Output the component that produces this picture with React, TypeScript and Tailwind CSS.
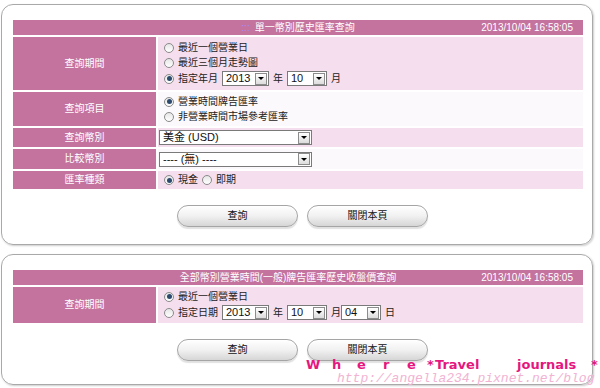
import { ReactNode } from 'react';

const PINK = 'bg-[#c4739f]';

function Radio({ checked = false }: { checked?: boolean }) {
  return (
    <span className="inline-flex items-center justify-center w-[10px] h-[10px] rounded-full border border-[#8a8a8a] bg-gradient-to-b from-[#e6e6e6] to-white shrink-0">
      {checked && <span className="w-[5px] h-[5px] rounded-full bg-[#2c4a6e]" />}
    </span>
  );
}

function Select({ value, width }: { value: string; width: string }) {
  return (
    <span
      className={`inline-flex items-center justify-between h-[15px] border border-[#7a7a7a] bg-white ${width}`}
    >
      <span className="pl-[3px] text-[11px] leading-none text-[#111] font-['Liberation_Sans','Noto_Sans_CJK_TC',sans-serif]">
        {value}
      </span>
      <span className="flex items-center justify-center w-[12px] h-[12px] mr-[1px] border border-[#8c8c8c] bg-gradient-to-b from-white to-[#dcdcdc]">
        <span className="w-0 h-0 border-l-[3px] border-r-[3px] border-t-[3px] border-l-transparent border-r-transparent border-t-black" />
      </span>
    </span>
  );
}

function Option({ checked, children }: { checked?: boolean; children: ReactNode }) {
  return (
    <span className="flex items-center gap-[4px]">
      <Radio checked={checked} />
      <span>{children}</span>
    </span>
  );
}

function Row({ label, height, light, children }: { label: string; height: string; light?: boolean; children: ReactNode }) {
  return (
    <div className={`flex gap-[2px] ${height}`}>
      <div className={`w-[143px] ${PINK} flex items-center justify-center text-white`}>{label}</div>
      <div className={`flex-1 flex flex-col justify-center pl-[6px] text-[#222] ${light ? 'bg-[#f5deee]' : 'bg-[#fbf9fb]'}`}>
        {children}
      </div>
    </div>
  );
}

function Header({ title, dots, shift }: { title: string; dots?: boolean; shift?: string }) {
  return (
    <div className={`relative ${PINK} h-[15px] flex items-center justify-center text-white`}>
      <span className={shift}>
        {dots && <span className="text-[#a98cf5] mr-[5px]">:::</span>}
        {title}
      </span>
      <span className="absolute right-[10px] top-0 h-full flex items-center font-['Liberation_Sans',sans-serif]">
        2013/10/04 16:58:05
      </span>
    </div>
  );
}

function Btn({ children }: { children: ReactNode }) {
  return (
    <div className="w-[121px] h-[22px] rounded-full border border-[#a5a5a5] bg-gradient-to-b from-white via-[#f1f1f1] to-[#d6d6d6] shadow-[inset_0_1px_0_#fff,0_2px_1px_rgba(0,0,0,0.12)] flex items-center justify-center text-[#111]">
      {children}
    </div>
  );
}

function Buttons() {
  return (
    <div className="mt-[16px] flex justify-center gap-[9px]">
      <Btn>查詢</Btn>
      <Btn>關閉本頁</Btn>
    </div>
  );
}

export default function App() {
  return (
    <div className="relative w-[600px] h-[388px] bg-white overflow-hidden text-[10px] leading-none font-['Liberation_Sans','Noto_Sans_CJK_TC',sans-serif]">
      <div className="ml-[1px] mt-[4px] w-[592px] h-[241px] rounded-[12px] border border-[#a9a9a9] shadow-[1px_1px_2px_rgba(0,0,0,0.2)] pt-[15px] pl-[11px]">
        <div className="w-[570px] flex flex-col gap-[2px]">
          <Header title="單一幣別歷史匯率查詢" dots />
          <Row label="查詢期間" height="h-[53px]" light>
            <div className="h-[15px] flex items-center"><Option>最近一個營業日</Option></div>
            <div className="h-[15px] flex items-center"><Option>最近三個月走勢圖</Option></div>
            <div className="h-[17px] flex items-center gap-[4px]">
              <Option checked>指定年月</Option>
              <Select value="2013" width="w-[47px]" />
              <span>年</span>
              <Select value="10" width="w-[40px]" />
              <span>月</span>
            </div>
          </Row>
          <Row label="查詢項目" height="h-[34px]">
            <div className="h-[15px] flex items-center"><Option checked>營業時間牌告匯率</Option></div>
            <div className="h-[15px] flex items-center"><Option>非營業時間市場參考匯率</Option></div>
          </Row>
          <Row label="查詢幣別" height="h-[19px]" light>
            <div className="-ml-[5px]"><Select value="美金 (USD)" width="w-[153px]" /></div>
          </Row>
          <Row label="比較幣別" height="h-[20px]">
            <div className="-ml-[5px]"><Select value="---- (無) ----" width="w-[153px]" /></div>
          </Row>
          <Row label="匯率種類" height="h-[18px]" light>
            <div className="flex items-center gap-[4px]">
              <Option checked>現金</Option>
              <Option>即期</Option>
            </div>
          </Row>
        </div>
        <Buttons />
      </div>

      <div className="ml-[1px] mt-[9px] w-[592px] h-[131px] rounded-[12px] border border-[#a9a9a9] shadow-[1px_1px_2px_rgba(0,0,0,0.2)] pt-[15px] pl-[11px]">
        <div className="w-[570px] flex flex-col gap-[2px]">
          <Header title="全部幣別營業時間(一般)牌告匯率歷史收盤價查詢" shift="mr-[20px]" />
          <Row label="查詢期間" height="h-[36px]" light>
            <div className="h-[15px] flex items-center"><Option checked>最近一個營業日</Option></div>
            <div className="h-[17px] flex items-center gap-[4px]">
              <Option>指定日期</Option>
              <Select value="2013" width="w-[47px]" />
              <span>年</span>
              <Select value="10" width="w-[40px]" />
              <span>月</span>
              <span className="-ml-[4px]"><Select value="04" width="w-[40px]" /></span>
              <span>日</span>
            </div>
          </Row>
        </div>
        <Buttons />
      </div>

      <div className="absolute left-[306px] top-[358px] flex items-baseline text-[13px] font-bold text-[#e5177f] whitespace-pre font-['DejaVu_Sans',sans-serif]">
        <span className="w-[26px]">W</span>
        <span className="w-[25px]">h</span>
        <span className="w-[26px]">e</span>
        <span className="w-[24px]">r</span>
        <span className="w-[20px]">e</span>
        <span className="w-[8px]">*</span>
        <span className="w-[82px]">Travel</span>
        <span className="w-[74px]">journals</span>
        <span>*</span>
      </div>
      <div className="absolute left-[337px] top-[372px] text-[13px] italic text-[#f2b3d3] whitespace-pre font-['Liberation_Mono',monospace]">
        http://angella234.pixnet.net/blog
      </div>
    </div>
  );
}
